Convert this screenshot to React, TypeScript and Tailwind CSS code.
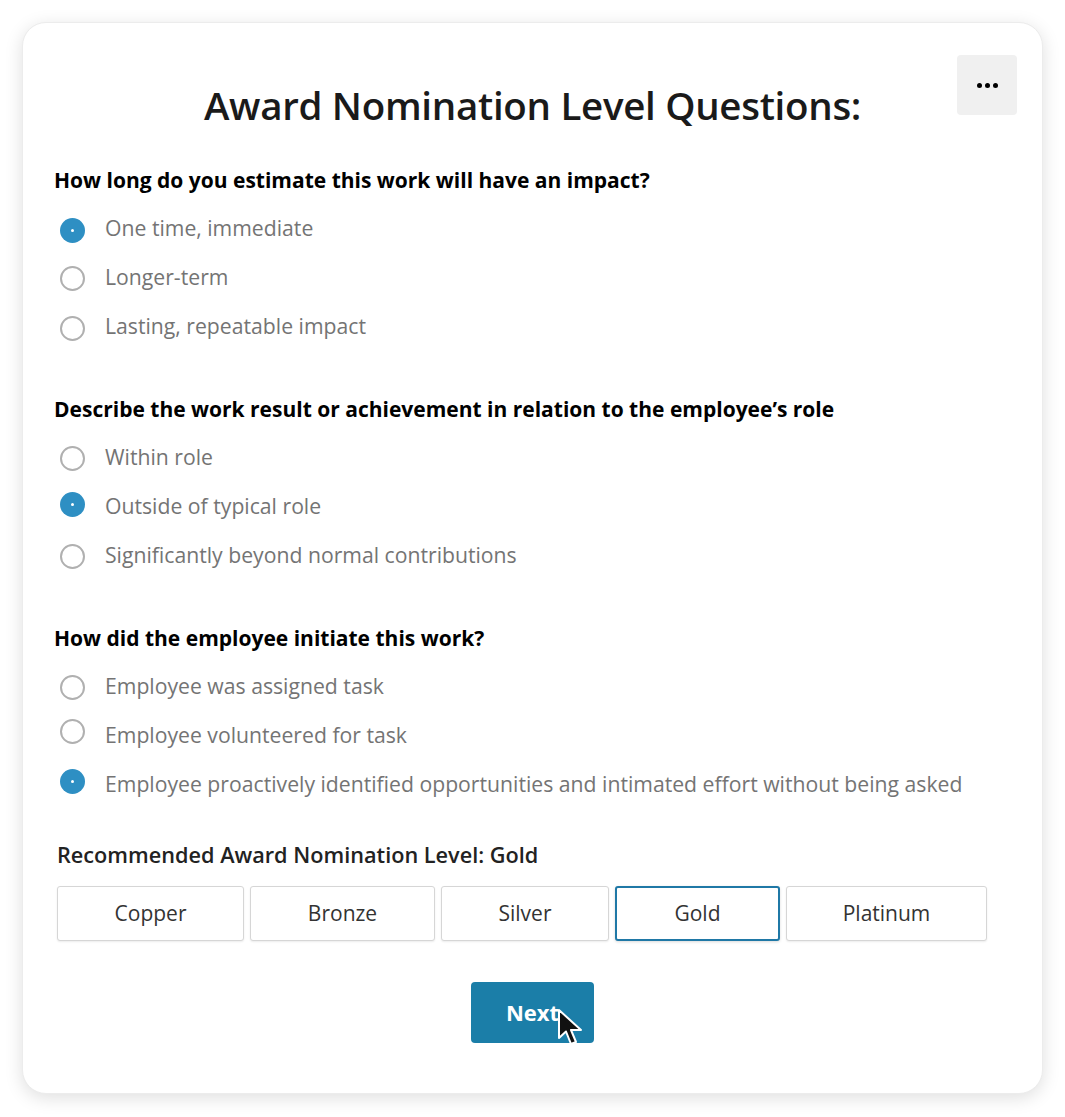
import { useState } from "react";

type Option = { label: string; radioShift: string };

const questions: { title: string; options: Option[]; selected: number }[] = [
  {
    title: "How long do you estimate this work will have an impact?",
    selected: 0,
    options: [
      { label: "One time, immediate", radioShift: "translate-y-[1px]" },
      { label: "Longer-term", radioShift: "translate-y-0" },
      { label: "Lasting, repeatable impact", radioShift: "translate-y-[1px]" },
    ],
  },
  {
    title: "Describe the work result or achievement in relation to the employee\u2019s role",
    selected: 1,
    options: [
      { label: "Within role", radioShift: "translate-y-0" },
      { label: "Outside of typical role", radioShift: "-translate-y-[3px]" },
      { label: "Significantly beyond normal contributions", radioShift: "translate-y-0" },
    ],
  },
  {
    title: "How did the employee initiate this work?",
    selected: 2,
    options: [
      { label: "Employee was assigned task", radioShift: "translate-y-0" },
      { label: "Employee volunteered for task", radioShift: "-translate-y-[5px]" },
      { label: "Employee proactively identified opportunities and intimated effort without being asked", radioShift: "-translate-y-[4px]" },
    ],
  },
];

const levels = [
  { name: "Copper", width: "w-[187px]" },
  { name: "Bronze", width: "w-[185px]" },
  { name: "Silver", width: "w-[168px]" },
  { name: "Gold", width: "w-[165px]" },
  { name: "Platinum", width: "w-[201px]" },
];

function Radio({ checked, shift }: { checked: boolean; shift: string }) {
  if (checked) {
    return (
      <span className={`ml-[6px] w-[25px] h-[25px] rounded-full bg-[#2e8fc3] flex items-center justify-center shrink-0 ${shift}`}>
        <span className="w-[3px] h-[3px] rounded-full bg-white" />
      </span>
    );
  }
  return (
    <span className={`ml-[6px] w-[25px] h-[25px] rounded-full border-2 border-[#b0b0b0] bg-white shrink-0 ${shift}`} />
  );
}

export default function App() {
  const [answers, setAnswers] = useState(questions.map((q) => q.selected));
  const [level, setLevel] = useState("Gold");

  return (
    <div
      className="min-h-screen bg-white pt-[22px] pl-[22px]"
      style={{ fontFamily: '"Open Sans", "Noto Sans", sans-serif' }}
    >
      <div className="relative w-[1021px] h-[1072px] bg-white rounded-[24px] border border-[#ececec] shadow-[0_4px_18px_rgba(0,0,0,0.13)] px-[31px] pt-[60px]">
        {/* More menu */}
        <button
          type="button"
          className="absolute top-[32px] right-[25px] w-[60px] h-[60px] rounded-[4px] bg-[#f0f0f0] flex items-center justify-center gap-[3px]"
        >
          <span className="w-[5px] h-[5px] rounded-full bg-black" />
          <span className="w-[5px] h-[5px] rounded-full bg-black" />
          <span className="w-[5px] h-[5px] rounded-full bg-black" />
        </button>

        <h1 className="text-center text-[38.5px] leading-[44px] font-semibold text-[#1a1a1a] tracking-[-0.3px]">
          Award Nomination Level Questions:
        </h1>

        {/* Questions */}
        {questions.map((q, qi) => (
          <div key={qi} className={qi === 0 ? "mt-[39px]" : "mt-[43px]"}>
            <h2 className="text-[21px] leading-[28px] font-bold text-black">{q.title}</h2>
            <div className="mt-[11px]">
              {q.options.map((opt, oi) => (
                <label
                  key={oi}
                  className="h-[49px] flex items-center cursor-pointer"
                  onClick={() => setAnswers(answers.map((a, i) => (i === qi ? oi : a)))}
                >
                  <Radio checked={answers[qi] === oi} shift={opt.radioShift} />
                  <span className="ml-[20px] text-[21.2px] leading-[28px] text-[#747474] -translate-y-[2px]">{opt.label}</span>
                </label>
              ))}
            </div>
          </div>
        ))}

        {/* Recommended level */}
        <p className="mt-[32px] ml-[3px] text-[21.7px] leading-[26px] font-semibold text-[#222]">
          Recommended Award Nomination Level: Gold
        </p>
        <div className="mt-[18px] ml-[3px] flex gap-[6px]">
          {levels.map((l) => (
            <button
              key={l.name}
              type="button"
              onClick={() => setLevel(l.name)}
              className={`${l.width} h-[55px] rounded-[3px] bg-white text-[21px] text-[#333] ${
                level === l.name
                  ? "border-2 border-[#1f78a6] shadow-[0_1px_3px_rgba(0,0,0,0.15)]"
                  : "border border-[#d6d6d6] shadow-[0_1px_2px_rgba(0,0,0,0.08)]"
              }`}
            >
              {l.name}
            </button>
          ))}
        </div>

        {/* Next */}
        <div className="mt-[41px] flex justify-center">
          <div className="relative">
            <button
              type="button"
              className="w-[123px] h-[61px] rounded-[4px] bg-[#1b7ea8] text-white text-[22px] font-bold"
            >
              Next
            </button>
            <svg
              className="absolute left-[86px] top-[26px]"
              width="28"
              height="40"
              viewBox="0 0 28 40"
            >
              <path
                d="M2 2 L2 30 L9 23.5 L14 36 L19 34 L14 22 L24 22 Z"
                fill="#111"
                stroke="#fff"
                strokeWidth="2"
                strokeLinejoin="round"
              />
            </svg>
          </div>
        </div>
      </div>
    </div>
  );
}
